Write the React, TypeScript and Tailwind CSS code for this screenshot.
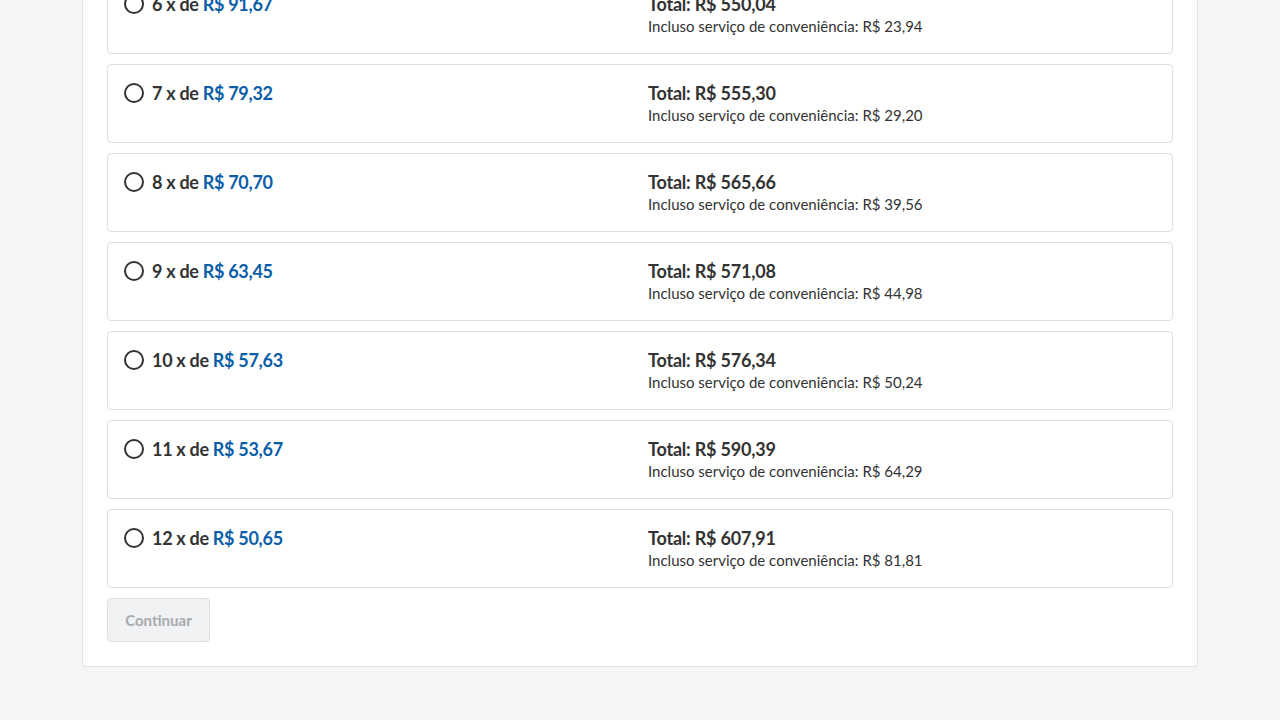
const options = [
  { n: 6, parcela: '91,67', total: '550,04', taxa: '23,94' },
  { n: 7, parcela: '79,32', total: '555,30', taxa: '29,20' },
  { n: 8, parcela: '70,70', total: '565,66', taxa: '39,56' },
  { n: 9, parcela: '63,45', total: '571,08', taxa: '44,98' },
  { n: 10, parcela: '57,63', total: '576,34', taxa: '50,24' },
  { n: 11, parcela: '53,67', total: '590,39', taxa: '64,29' },
  { n: 12, parcela: '50,65', total: '607,91', taxa: '81,81' },
];

export default function App() {
  return (
    <div
      className="min-h-screen overflow-hidden bg-[#f5f5f5] text-[#333]"
      style={{ fontFamily: 'Lato, "Noto Sans", sans-serif' }}
    >
      <div className="mx-auto -mt-[50px] w-[1116px] rounded border border-[#e2e2e6] bg-white p-6">
        <ul className="flex flex-col gap-[10px]">
          {options.map((o) => (
            <li
              key={o.n}
              className="grid h-[79px] grid-cols-2 gap-4 rounded border border-[#dedfe3] bg-white p-4"
            >
              <label className="flex h-6 items-center gap-2">
                <span className="h-5 w-5 shrink-0 rounded-full border-2 border-[#333]" />
                <span className="text-[18px] font-bold leading-6 tracking-[-0.3px]">
                  {o.n} x de <span className="text-[#0a5ea8]">R$ {o.parcela}</span>
                </span>
              </label>
              <div>
                <p className="text-[18px] font-bold leading-6 tracking-[-0.2px]">Total: R$ {o.total}</p>
                <p className="text-[15px] leading-[21px]">
                  Incluso serviço de conveniência: R$ {o.taxa}
                </p>
              </div>
            </li>
          ))}
        </ul>
        <button
          type="button"
          disabled
          className="mt-[10px] h-[44px] w-[103px] rounded border border-[#dcdfe3] bg-[#f1f2f4] text-[15px] font-bold text-[#a8aaae]"
        >
          Continuar
        </button>
      </div>
    </div>
  );
}
